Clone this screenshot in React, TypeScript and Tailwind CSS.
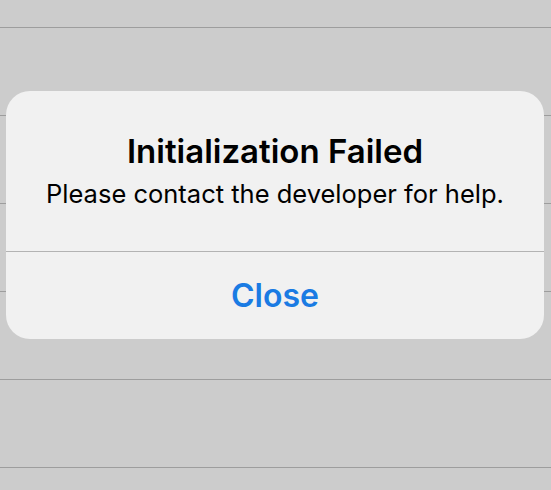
const rows = [0, 1, 2, 3, 4];

export default function App() {
  return (
    <div className="relative h-[490px] w-[551px] overflow-hidden bg-[#cccccc] font-['Inter',sans-serif]">
      {/* list behind the alert */}
      <div className="h-[28px] border-b border-[#9d9d9d]" />
      {rows.map((r) => (
        <div key={r} className="h-[88px] border-b border-[#9d9d9d]" />
      ))}

      <div className="absolute left-[6px] top-[91px] flex h-[248px] w-[538px] flex-col overflow-hidden rounded-[24px] bg-[#f1f1f1]">
        <div className="flex h-[160px] flex-col items-center pt-[40px] text-black">
          <h2 className="text-[33px] font-semibold leading-[40px]">Initialization Failed</h2>
          <p className="mt-[7px] text-[25.5px] leading-[32px]">
            Please contact the developer for help.
          </p>
        </div>
        <button className="flex flex-1 items-center justify-center border-t border-[#b3b3b3] text-[32px] font-semibold text-[#1a7be3]">
          Close
        </button>
      </div>
    </div>
  );
}
